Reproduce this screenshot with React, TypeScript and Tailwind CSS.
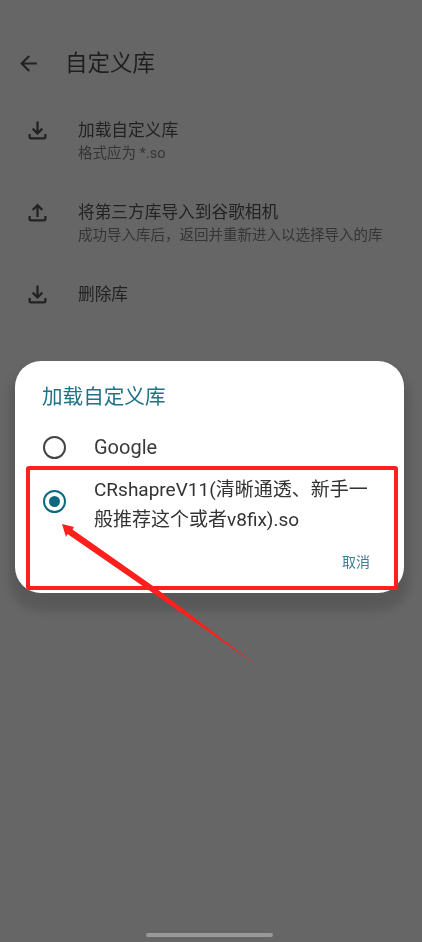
const font = "font-['Roboto','Noto_Sans_CJK_SC',sans-serif]"

const DOWNLOAD = "M18 15v3H6v-3H4v3c0 1.1.9 2 2 2h12c1.1 0 2-.9 2-2v-3h-2zm-1-4l-1.41-1.41L13 12.17V4h-2v8.17L8.41 9.59 7 11l5 5 5-5z"
const UPLOAD = "M18 15v3H6v-3H4v3c0 1.1.9 2 2 2h12c1.1 0 2-.9 2-2v-3h-2zM7 9l1.41 1.41L11 7.83V16h2V7.83l2.59 2.58L17 9l-5-5-5 5z"

function Row({ icon, title, sub }: { icon: string; title: string; sub?: string }) {
  return (
    <div className="flex h-[82px] items-start pl-[24px]">
      <svg viewBox="0 0 24 24" className="h-[27px] w-[27px] fill-[#222222]">
        <path d={icon} />
      </svg>
      <div className="ml-[27px] flex flex-col">
        <div className="text-[16.7px] leading-[27px] text-[#222222]">{title}</div>
        {sub ? <div className="text-[14.5px] leading-[20px] text-[#353535]">{sub}</div> : null}
      </div>
    </div>
  )
}

function Radio({ checked }: { checked?: boolean }) {
  return (
    <div className={`flex h-[23px] w-[23px] shrink-0 items-center justify-center rounded-full border-[2.5px] ${checked ? "border-[#0b6a80]" : "border-[#444444]"}`}>
      {checked ? <div className="h-[11px] w-[11px] rounded-full bg-[#0b6a80]" /> : null}
    </div>
  )
}

export default function App() {
  return (
    <div className={`relative flex h-[942px] w-[422px] flex-col overflow-hidden bg-[#666666] blur-[0.35px] ${font}`}>
      <div className="mt-[40px] flex h-[47px] items-center pl-[16px]">
        <svg viewBox="0 0 24 24" className="h-[25px] w-[25px] fill-[#222222]">
          <path d="M20 11H7.83l5.59-5.59L12 4l-8 8 8 8 1.41-1.41L7.83 13H20v-2z" />
        </svg>
        <div className="ml-[24px] text-[22.5px] text-[#1e1e1e]">自定义库</div>
      </div>
      <div className="mt-[30px] flex flex-col">
        <Row icon={DOWNLOAD} title="加载自定义库" sub="格式应为 *.so" />
        <Row icon={UPLOAD} title="将第三方库导入到谷歌相机" sub="成功导入库后，返回并重新进入以选择导入的库" />
        <Row icon={DOWNLOAD} title="删除库" />
      </div>

      <div className="mt-auto mb-[5px] ml-[146px] h-[4px] w-[127px] rounded-full bg-[#999999]" />

      {/* dialog */}
      <div className="absolute left-[15px] top-[361px] flex h-[232px] w-[389px] flex-col rounded-[26px] bg-white shadow-[0_12px_8px_6px_rgba(0,0,0,0.13)]">
        <div className="pl-[27px] pt-[22px] text-[20.6px] leading-[28px] text-[#1f7287]">加载自定义库</div>
        <div className="mt-[16px] flex h-[40px] items-center pl-[28px]">
          <Radio />
          <div className="ml-[28px] text-[20px] text-[#3a3a3a]">Google</div>
        </div>
        <div className="mt-[8px] flex items-start pl-[28px]">
          <div className="mt-[15px]">
            <Radio checked />
          </div>
          <div className="ml-[28px] w-[280px] text-[19px] leading-[30px] text-[#333333]">CRshapreV11(清晰通透、新手一般推荐这个或者v8fix).so</div>
        </div>
        <div className="mt-[17px] pr-[34px] text-right text-[14px] leading-[20px] text-[#3a8092]">取消</div>
      </div>

      {/* red annotation */}
      <div className="absolute left-[26px] top-[466px] h-[124px] w-[372px] rounded-[3px] border-[4px] border-[#ff1f1c]" />
      <svg viewBox="0 0 422 942" className="absolute left-0 top-0 h-[942px] w-[422px]">
        <polygon points="62,524 74,527 72.5,529.5 153,586 255,664 150,591 67.5,534 66,537" fill="#ff1f1c" />
      </svg>
    </div>
  )
}
